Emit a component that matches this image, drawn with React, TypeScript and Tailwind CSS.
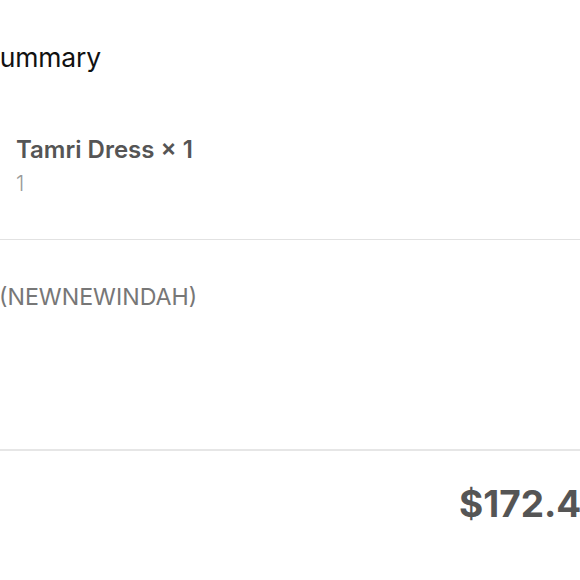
import React from 'react';

const font = { fontFamily: 'Inter, "Noto Sans", sans-serif' };

export default function App() {
  return (
    <div className="w-[580px] h-[580px] overflow-hidden bg-white" style={font}>
      <div className="w-[640px] flex flex-col">
        <div className="pt-[39px] h-[120px]">
          <h2 className="-ml-[17px] text-[26.5px] leading-[36px] text-[#111] font-normal tracking-[-0.2px]">Summary</h2>
        </div>

        <div className="pl-[16px] pt-[15px] h-[120px] border-b border-[#e2e2e2]">
          <div className="text-[24px] leading-[30px] font-semibold text-[#555]">Tamri Dress × 1</div>
          <div className="mt-[6px] text-[21px] leading-[26px] font-light text-[#9a9a9a]">1</div>
        </div>

        <div className="h-[211px] pt-[43px] border-b-2 border-[#e6e6e6]">
          <div className="-ml-[1px] text-[23.2px] leading-[28px] text-[#777]">(NEWNEWINDAH)</div>
        </div>

        <div className="flex pt-[31px]">
          <div className="ml-[459px] w-full text-[37px] leading-[44px] font-bold text-[#555]">$172.43</div>
        </div>
      </div>
    </div>
  );
}
